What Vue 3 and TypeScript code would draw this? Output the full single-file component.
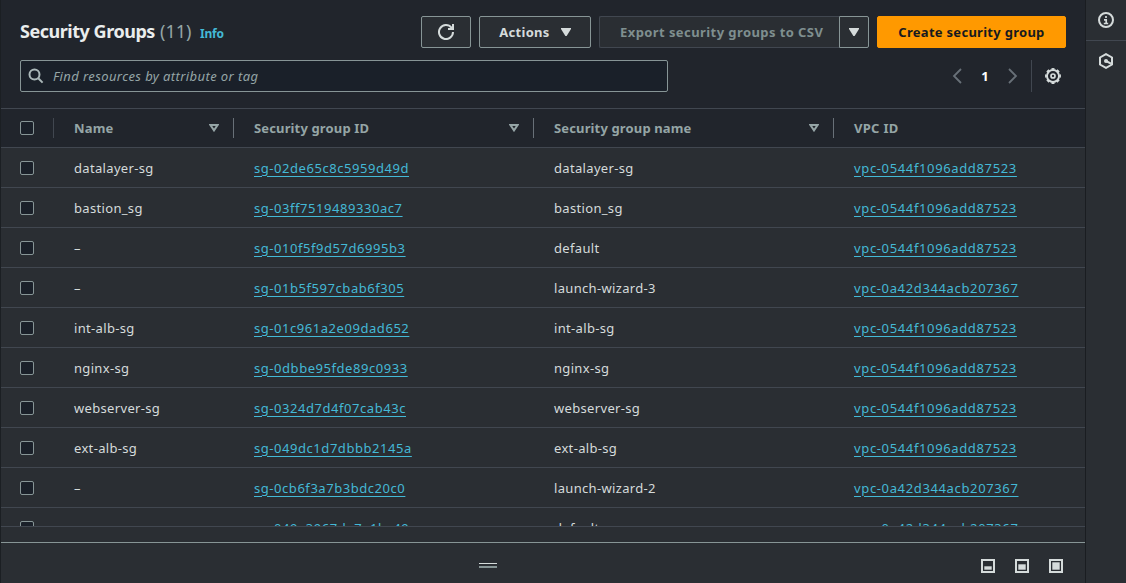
<script setup lang="ts">
interface Group { name: string; id: string; group: string; vpc: string }
const A = 'vpc-0544f1096add87523'
const B = 'vpc-0a42d344acb207367'
const rows: Group[] = [
  { name: 'datalayer-sg', id: 'sg-02de65c8c5959d49d', group: 'datalayer-sg', vpc: A },
  { name: 'bastion_sg', id: 'sg-03ff7519489330ac7', group: 'bastion_sg', vpc: A },
  { name: '–', id: 'sg-010f5f9d57d6995b3', group: 'default', vpc: A },
  { name: '–', id: 'sg-01b5f597cbab6f305', group: 'launch-wizard-3', vpc: B },
  { name: 'int-alb-sg', id: 'sg-01c961a2e09dad652', group: 'int-alb-sg', vpc: A },
  { name: 'nginx-sg', id: 'sg-0dbbe95fde89c0933', group: 'nginx-sg', vpc: A },
  { name: 'webserver-sg', id: 'sg-0324d7d4f07cab43c', group: 'webserver-sg', vpc: A },
  { name: 'ext-alb-sg', id: 'sg-049dc1d7dbbb2145a', group: 'ext-alb-sg', vpc: A },
  { name: '–', id: 'sg-0cb6f3a7b3bdc20c0', group: 'launch-wizard-2', vpc: B },
  { name: '–', id: 'sg-049a3967da7a1bc49', group: 'default', vpc: B },
]
const columns = ['Name', 'Security group ID', 'Security group name', 'VPC ID']
const layouts = [{ y: 7, h: 4 }, { y: 5, h: 6 }, { y: 3, h: 8 }]
</script>

<template>
  <div class="app">
    <main class="main">
      <header class="top">
        <div class="titlebar">
          <h1><span class="title">Security Groups</span><span class="count">(11)</span><a class="info">Info</a></h1>
          <div class="actions">
            <button class="btn refresh">
              <svg width="16" height="16" viewBox="0 0 16 16" fill="none" stroke="currentColor" stroke-width="2"><path d="M10 5h5V0M15 8a7 7 0 1 1-1.5-4.3L15 5" /></svg>
            </button>
            <button class="btn act"><span>Actions</span><svg width="10" height="8" viewBox="0 0 10 8"><path d="M0 0h10v1L5.6 8h-1.2L0 1z" fill="currentColor" /></svg></button>
            <div class="split">
              <button class="btn export"><span>Export security groups to CSV</span></button>
              <button class="btn drop"><svg width="10" height="8" viewBox="0 0 10 8"><path d="M0 0h10v1L5.6 8h-1.2L0 1z" fill="currentColor" /></svg></button>
            </div>
            <button class="btn create"><span>Create security group</span></button>
          </div>
        </div>
        <div class="filterbar">
          <div class="search">
            <svg width="16" height="16" viewBox="0 0 16 16" fill="none" stroke="currentColor" stroke-width="2"><circle cx="6.5" cy="6.5" r="5" /><path d="m10 10 4.6 4.6" /></svg>
            <span>Find resources by attribute or tag</span>
          </div>
          <div class="pager">
            <svg width="10" height="16" viewBox="0 0 10 16" fill="none" stroke="currentColor" stroke-width="1.8"><path d="M9 1 2 8l7 7" /></svg>
            <b>1</b>
            <svg width="10" height="16" viewBox="0 0 10 16" fill="none" stroke="currentColor" stroke-width="1.8"><path d="m1 1 7 7-7 7" /></svg>
            <i class="rule"></i>
            <svg class="gear" width="16" height="16" viewBox="0 0 16 16" fill="none" stroke="currentColor"><circle cx="8" cy="8" r="6" stroke-width="1.9" /><circle cx="8" cy="8" r="7.1" stroke-width="1.7" pathLength="16" stroke-dasharray="1.1 .9" stroke-dashoffset=".55" /><circle cx="8" cy="8" r="2" stroke-width="1.7" /></svg>
          </div>
        </div>
      </header>
      <section class="table">
        <div class="row head">
          <div class="check"><i class="box"></i></div>
          <div v-for="(c, i) in columns" :key="c" class="cell">
            <span>{{ c }}</span>
            <svg v-if="i < 3" width="10" height="8" viewBox="0 0 10 8" fill="none" stroke="currentColor" stroke-width="2"><path d="M1.4 1h7.2L5 6.4z" /></svg>
          </div>
        </div>
        <div v-for="r in rows" :key="r.id" class="row">
          <div class="check"><i class="box"></i></div>
          <div class="cell">{{ r.name }}</div>
          <div class="cell"><a class="sg">{{ r.id }}</a></div>
          <div class="cell">{{ r.group }}</div>
          <div class="cell"><a class="vpc">{{ r.vpc }}</a></div>
        </div>
      </section>
      <div class="scroll"></div>
      <footer class="panel">
        <div class="grip"></div>
        <div class="modes">
          <svg v-for="l in layouts" :key="l.y" width="14" height="14" viewBox="0 0 14 14"><path d="M1 1h12v12H1z" fill="none" stroke="currentColor" stroke-width="2" /><rect x="3" :y="l.y" width="8" :height="l.h" fill="currentColor" /></svg>
        </div>
      </footer>
    </main>
    <aside class="rail">
      <div class="tool"><svg width="16" height="16" viewBox="0 0 16 16" fill="none" stroke="currentColor" stroke-width="2"><circle cx="8" cy="8" r="7" /><path d="M8 4v2M6 7.8h2.2V11M5.8 11.5h4.4" stroke-width="1.7" /></svg></div>
      <div class="tool"><svg width="16" height="16" viewBox="0 0 16 16" fill="none" stroke="currentColor" stroke-width="2"><path d="m8 1.1 6 3.4v7l-6 3.4-6-3.4v-7zM8 8l5 2.6" /><circle cx="8" cy="8" r="2" fill="currentColor" stroke="none" /></svg></div>
    </aside>
  </div>
</template>

<style>
body { margin: 0; background: #2a2e33; }
</style>
<style scoped>
* { box-sizing: border-box; }
svg { display: block; flex: none; }
.app { display: flex; width: 1126px; height: 583px; overflow: hidden; background: #2a2e33; color: #d5dbdb; font: 13px/20px "Noto Sans", sans-serif; }
.main { width: 1086px; height: 583px; display: flex; flex-direction: column; border-left: 1px solid #1b1f23; border-right: 1px solid #1a1d21; }
.top { height: 108px; padding: 16px 19px 0; background: #21252c; flex: none; }
.titlebar { display: flex; justify-content: space-between; height: 32px; margin-bottom: 12px; }
h1 { margin: 0; display: flex; align-items: baseline; white-space: nowrap; font-size: 18px; line-height: 30px; }
.title { font-weight: 700; color: #eaeded; width: 140px; letter-spacing: -.47px; }
.count { font-weight: 400; color: #95a5a6; width: 40px; }
.info { font-size: 12px; color: #44b9d6; font-weight: 700; letter-spacing: -.2px; }
.actions { display: flex; }
.btn { height: 32px; margin: 0; padding: 0; display: flex; align-items: center; justify-content: center; font: 700 13px/20px "Noto Sans", sans-serif; letter-spacing: .28px; color: #d5dbdb; background: #2a2e33; border: 1px solid #879596; border-radius: 2px; white-space: nowrap; }
.refresh { width: 50px; margin-right: 8px; }
.act { width: 112px; gap: 11px; margin-right: 8px; }
.split { display: flex; margin-right: 8px; }
.export { width: 240px; justify-content: flex-start; padding-left: 20px; letter-spacing: .42px; color: #7f8f8f; border-color: #414750; border-right: 0; border-radius: 2px 0 0 2px; }
.drop { width: 30px; border-radius: 0 2px 2px 0; }
.create { width: 189px; background: #ff9900; border-color: #ff9900; color: #16191f; }
.filterbar { display: flex; justify-content: space-between; height: 32px; }
.search { width: 648px; display: flex; align-items: center; gap: 9px; padding-left: 7px; border: 1px solid #879596; border-radius: 2px; background: #1a2029; color: #95a5a6; font-style: italic; letter-spacing: .4px; }
.search svg { color: #aab7b8; }
.pager { display: flex; align-items: center; width: 114px; color: #687078; }
.pager b { width: 46px; text-align: center; color: #fff; }
.rule { width: 1px; height: 32px; background: #414750; margin: 0 13px; }
.gear { color: #d5dbdb; }
.table { height: 418px; overflow: hidden; flex: none; border-top: 1px solid #414750; }
.row { display: grid; grid-template-columns: 53px 180px 300px 300px 251px; height: 40px; border-bottom: 1px solid #414750; align-items: center; }
.row.head { height: 39px; background: #21252c; font-weight: 700; color: #95a5a6; }
.check { padding-left: 19px; position: relative; }
.box { display: block; width: 14px; height: 14px; border: 1px solid #879596; border-radius: 2px; background: #1a2029; }
.cell { padding-left: 20px; white-space: nowrap; letter-spacing: .33px; }
.head .check { height: 20px; padding-top: 3px; border-right: 1px solid #414750; }
.head .cell { display: flex; align-items: center; justify-content: space-between; height: 20px; padding-right: 14px; border-right: 1px solid #687078; letter-spacing: .14px; }
.head .cell:last-child { border: 0; letter-spacing: .3px; }
.cell a { color: #44b9d6; text-decoration: underline; text-underline-offset: 3px; text-decoration-thickness: 1px; text-decoration-skip-ink: auto; }
.cell .sg { letter-spacing: .55px; }
.cell .vpc { letter-spacing: .64px; }
.scroll { height: 16px; flex: none; border-top: 1px solid #414750; }
.panel { height: 41px; border-top: 1px solid #879596; display: flex; align-items: center; justify-content: space-between; padding: 5px 22px 0 478px; }
.grip { width: 18px; height: 5px; margin-bottom: 1px; border-top: 1px solid #d5dbdb; border-bottom: 2px solid #879596; }
.modes { display: flex; gap: 20px; }
.modes rect { stroke: #2a2e33; stroke-width: .6; }
.rail { width: 40px; background: #2a2e33; }
.tool { height: 41px; display: flex; align-items: center; justify-content: center; border-bottom: 1px solid #414750; }
.tool + .tool { height: 40px; border: 0; }
.head .check, .head .cell { height: 20px; }
</style>
